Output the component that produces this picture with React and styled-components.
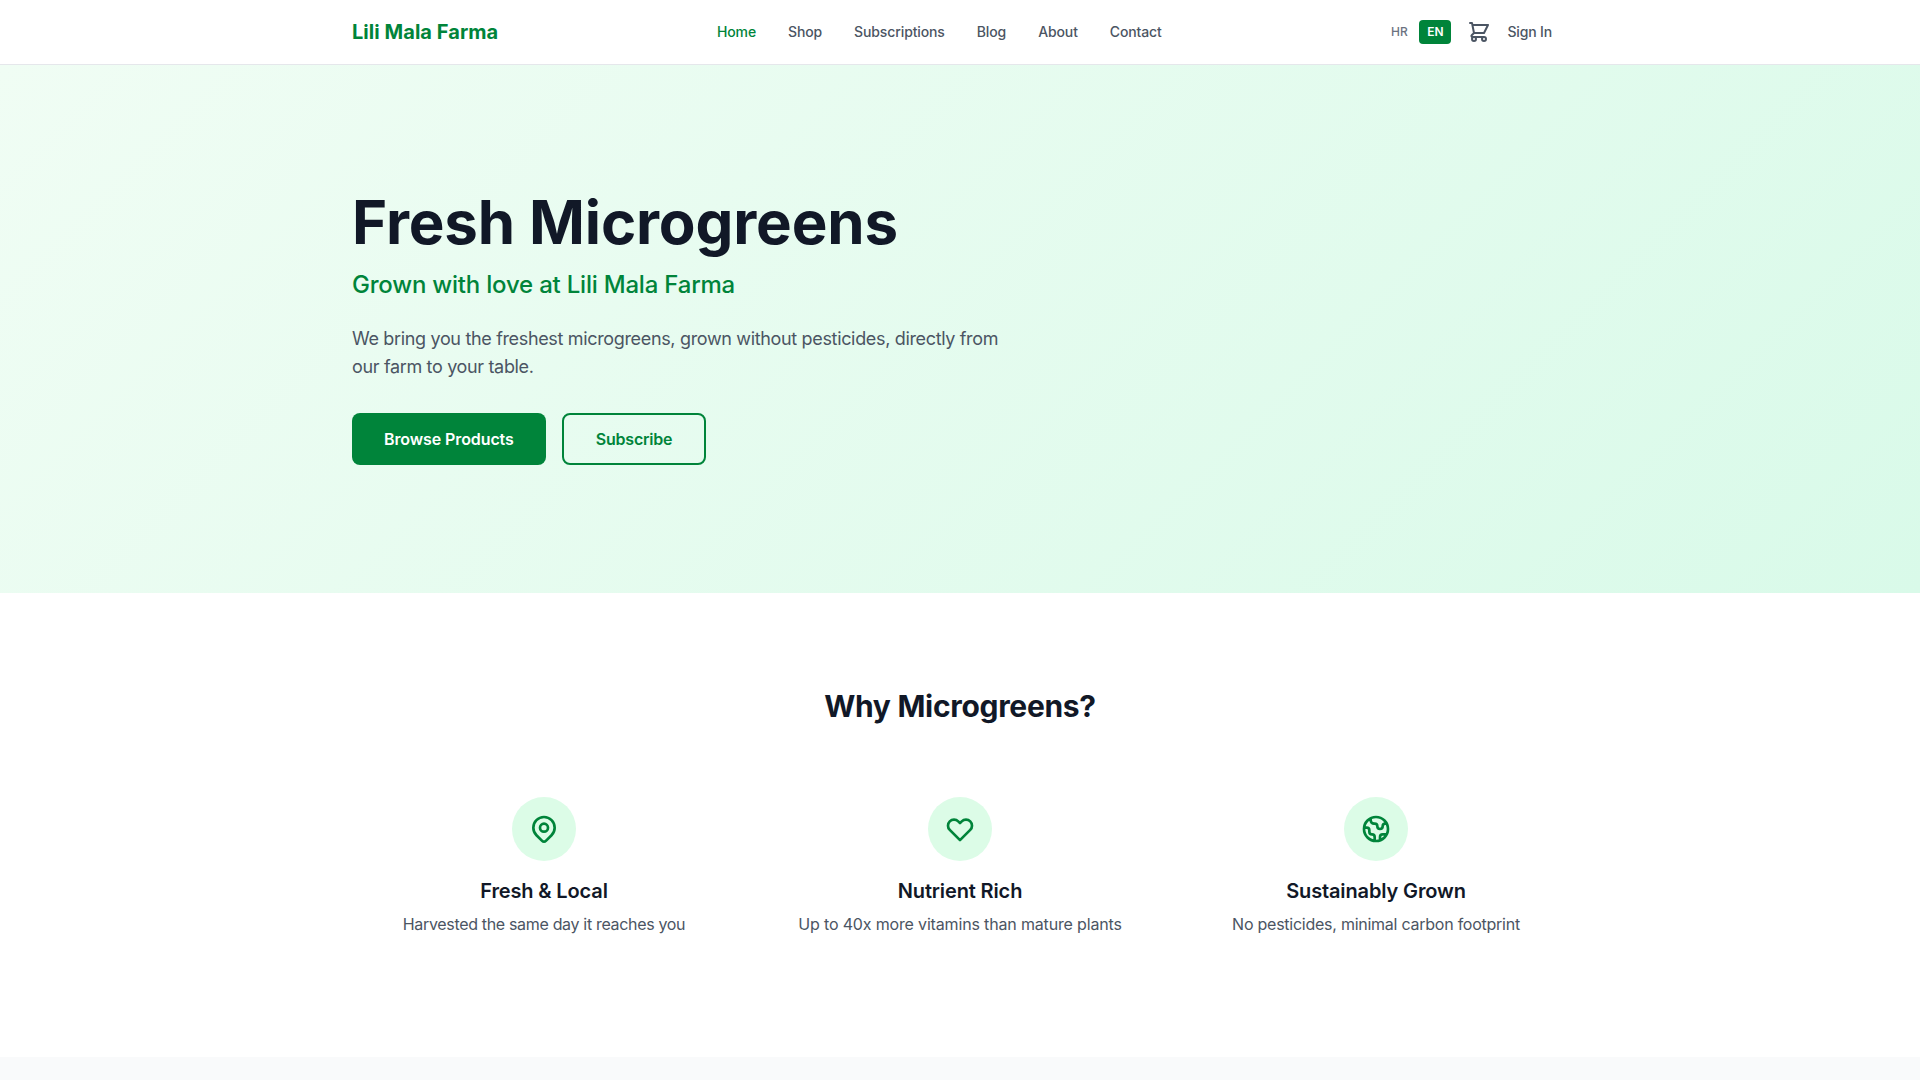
import React from 'react'
import styled, { createGlobalStyle } from 'styled-components'
import { HiOutlineShoppingCart, HiOutlineLocationMarker, HiOutlineHeart, HiOutlineGlobe } from 'react-icons/hi'

const GlobalStyle = createGlobalStyle`
  * { box-sizing: border-box; }
  body {
    margin: 0;
    background: #fff;
    font-family: Inter, "Liberation Sans", sans-serif;
    color: #111827;
  }
`

const Header = styled.header`
  height: 65px;
  border-bottom: 1px solid #e5e7eb;
  background: #fff;
`

const HeaderInner = styled.div`
  width: 1216px;
  height: 64px;
  margin: 0 auto;
  display: flex;
  justify-content: space-between;
  align-items: center;
`

const Logo = styled.a`
  font-size: 20px;
  font-weight: 700;
  letter-spacing: 0.05px;
  color: #00843a;
`

const Nav = styled.nav`
  display: flex;
  gap: 32px;
  padding-bottom: 2px;
  margin-right: 3px;
`

const NavLink = styled.a`
  font-size: 14px;
  font-weight: 500;
  letter-spacing: -0.12px;
  color: ${({ $active }) => ($active ? '#00843a' : '#4b5563')};
`

const HeaderActions = styled.div`
  display: flex;
  align-items: center;
  padding-right: 16px;
`

const LangSwitch = styled.div`
  display: flex;
  gap: 4px;
  margin-right: 16px;
`

const LangButton = styled.span`
  width: 32px;
  height: 24px;
  padding-bottom: 1px;
  display: flex;
  align-items: center;
  justify-content: center;
  border-radius: 4px;
  font-size: 12px;
  font-weight: ${({ $active }) => ($active ? 600 : 500)};
  color: ${({ $active }) => ($active ? '#fff' : '#6b7280')};
  background: ${({ $active }) => ($active ? '#00843a' : 'transparent')};
`

const CartIcon = styled(HiOutlineShoppingCart)`
  width: 24px;
  height: 24px;
  color: #4b5563;
  margin-right: 16px;
`

const SignIn = styled.a`
  font-size: 14px;
  font-weight: 500;
  letter-spacing: -0.15px;
  padding-bottom: 2px;
  color: #4b5563;
`

const Hero = styled.section`
  height: 528px;
  background: linear-gradient(135deg, #f0fdf4 0%, #d9fae9 100%);
`

const HeroInner = styled.div`
  width: 1216px;
  margin: 0 auto;
  padding-top: 127px;
`

const HeroTitle = styled.h1`
  margin: 0;
  font-size: 60px;
  line-height: 60px;
  font-weight: 700;
  letter-spacing: -0.15px;
  color: #111827;
`

const HeroTagline = styled.p`
  margin: 17px 0 0;
  font-size: 24px;
  line-height: 32px;
  font-weight: 500;
  letter-spacing: -0.21px;
  color: #00843a;
`

const HeroText = styled.p`
  margin: 24px 0 0;
  width: 672px;
  font-size: 18px;
  line-height: 28px;
  letter-spacing: -0.34px;
  color: #4b5563;
`

const HeroButtons = styled.div`
  display: flex;
  gap: 16px;
  margin-top: 32px;
`

const Button = styled.a`
  height: 52px;
  padding: 0 32px 1px;
  display: flex;
  align-items: center;
  border-radius: 8px;
  font-size: 16px;
  font-weight: 600;
  letter-spacing: ${({ $outline }) => ($outline ? '-0.2px' : '-0.1px')};
  color: ${({ $outline }) => ($outline ? '#00843a' : '#fff')};
  background: ${({ $outline }) => ($outline ? 'transparent' : '#00843a')};
  border: ${({ $outline }) => ($outline ? '2px solid #00843a' : 'none')};
`

const Features = styled.section`
  height: 464px;
  padding-top: 95px;
`

const FeaturesTitle = styled.h2`
  margin: 0;
  text-align: center;
  font-size: 30px;
  line-height: 36px;
  font-weight: 700;
  letter-spacing: -0.3px;
  color: #111827;
`

const FeatureGrid = styled.div`
  width: 1216px;
  margin: 73px auto 0;
  display: grid;
  grid-template-columns: repeat(3, 1fr);
  gap: 32px;
`

const Feature = styled.div`
  display: flex;
  flex-direction: column;
  align-items: center;
  text-align: center;
`

const IconCircle = styled.div`
  width: 64px;
  height: 64px;
  border-radius: 50%;
  background: #dcfce7;
  color: #00843a;
  display: flex;
  align-items: center;
  justify-content: center;
  font-size: 32px;
`

const FeatureTitle = styled.h3`
  margin: 16px 0 0;
  font-size: 20px;
  line-height: 28px;
  font-weight: 600;
  letter-spacing: -0.13px;
  color: #111827;
`

const FeatureText = styled.p`
  margin: 7px 0 0;
  font-size: 16px;
  line-height: 24px;
  letter-spacing: ${({ $tracking }) => $tracking}px;
  color: #4b5563;
`

const NextSection = styled.section`
  height: 23px;
  background: #f9fafb;
`

const navItems = ['Home', 'Shop', 'Subscriptions', 'Blog', 'About', 'Contact']

const features = [
  { icon: HiOutlineLocationMarker, title: 'Fresh & Local', text: 'Harvested the same day it reaches you', tracking: -0.33 },
  { icon: HiOutlineHeart, title: 'Nutrient Rich', text: 'Up to 40x more vitamins than mature plants', tracking: -0.16 },
  { icon: HiOutlineGlobe, title: 'Sustainably Grown', text: 'No pesticides, minimal carbon footprint', tracking: -0.25 },
]

export default function App() {
  return (
    <>
      <GlobalStyle />
      <Header>
        <HeaderInner>
          <Logo>Lili Mala Farma</Logo>
          <Nav>
            {navItems.map((item, i) => (
              <NavLink key={item} $active={i === 0}>{item}</NavLink>
            ))}
          </Nav>
          <HeaderActions>
            <LangSwitch>
              <LangButton>HR</LangButton>
              <LangButton $active>EN</LangButton>
            </LangSwitch>
            <CartIcon />
            <SignIn>Sign In</SignIn>
          </HeaderActions>
        </HeaderInner>
      </Header>
      <Hero>
        <HeroInner>
          <HeroTitle>Fresh Microgreens</HeroTitle>
          <HeroTagline>Grown with love at Lili Mala Farma</HeroTagline>
          <HeroText>We bring you the freshest microgreens, grown without pesticides, directly from our farm to your table.</HeroText>
          <HeroButtons>
            <Button>Browse Products</Button>
            <Button $outline>Subscribe</Button>
          </HeroButtons>
        </HeroInner>
      </Hero>
      <Features>
        <FeaturesTitle>Why Microgreens?</FeaturesTitle>
        <FeatureGrid>
          {features.map(({ icon: Icon, title, text, tracking }) => (
            <Feature key={title}>
              <IconCircle><Icon /></IconCircle>
              <FeatureTitle>{title}</FeatureTitle>
              <FeatureText $tracking={tracking}>{text}</FeatureText>
            </Feature>
          ))}
        </FeatureGrid>
      </Features>
      <NextSection />
    </>
  )
}
